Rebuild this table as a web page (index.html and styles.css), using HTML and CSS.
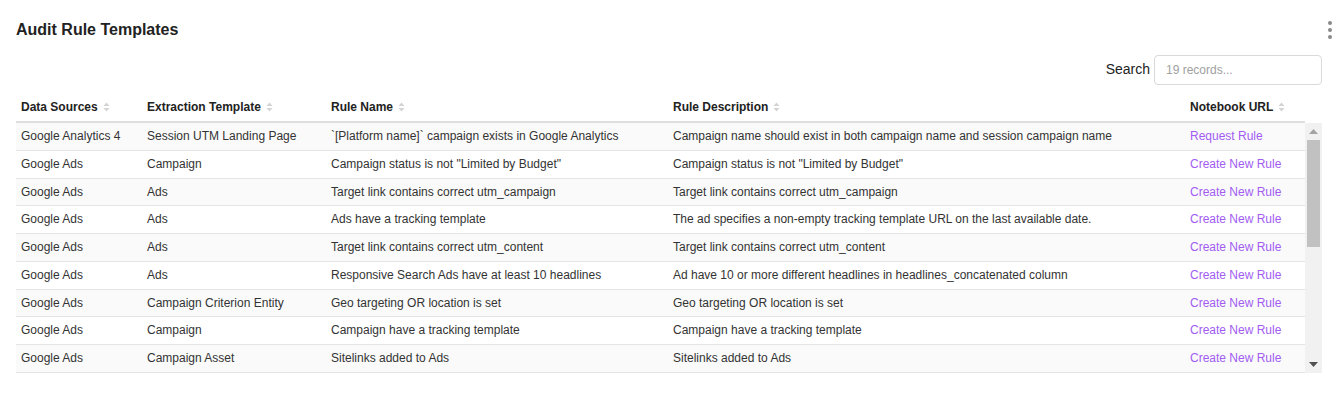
FILE: index.html
```html
<!DOCTYPE html>
<html>
<head>
<meta charset="utf-8">
<link rel="stylesheet" href="styles.css">
</head>
<body>
<div class="page">
  <div class="titlebar">
    <h1 class="title">Audit Rule Templates</h1>
    <div class="kebab"><span></span><span></span><span></span></div>
  </div>
  <div class="searchbar">
    <label class="search-label">Search</label>
    <input class="search-input" type="text" placeholder="19 records...">
  </div>
  <div class="table">
    <div class="thead row-grid">
      <div class="th">Data Sources <svg class="sort" width="7" height="10" viewBox="0 0 7 10"><path d="M3.5 0.5 L6.5 4 L0.5 4 Z M3.5 9.5 L6.5 6 L0.5 6 Z" fill="#d4d4d4"/></svg></div>
      <div class="th">Extraction Template <svg class="sort" width="7" height="10" viewBox="0 0 7 10"><path d="M3.5 0.5 L6.5 4 L0.5 4 Z M3.5 9.5 L6.5 6 L0.5 6 Z" fill="#d4d4d4"/></svg></div>
      <div class="th">Rule Name <svg class="sort" width="7" height="10" viewBox="0 0 7 10"><path d="M3.5 0.5 L6.5 4 L0.5 4 Z M3.5 9.5 L6.5 6 L0.5 6 Z" fill="#d4d4d4"/></svg></div>
      <div class="th">Rule Description <svg class="sort" width="7" height="10" viewBox="0 0 7 10"><path d="M3.5 0.5 L6.5 4 L0.5 4 Z M3.5 9.5 L6.5 6 L0.5 6 Z" fill="#d4d4d4"/></svg></div>
      <div class="th">Notebook URL <svg class="sort" width="7" height="10" viewBox="0 0 7 10"><path d="M3.5 0.5 L6.5 4 L0.5 4 Z M3.5 9.5 L6.5 6 L0.5 6 Z" fill="#d4d4d4"/></svg></div>
    </div>
    <div class="tbody-wrap">
      <div class="tbody">
        <div class="tr row-grid"><div class="td">Google Analytics 4</div><div class="td">Session UTM Landing Page</div><div class="td">`[Platform name]` campaign exists in Google Analytics</div><div class="td">Campaign name should exist in both campaign name and session campaign name</div><div class="td"><a class="link">Request Rule</a></div></div>
        <div class="tr row-grid"><div class="td">Google Ads</div><div class="td">Campaign</div><div class="td">Campaign status is not "Limited by Budget"</div><div class="td">Campaign status is not "Limited by Budget"</div><div class="td"><a class="link">Create New Rule</a></div></div>
        <div class="tr row-grid"><div class="td">Google Ads</div><div class="td">Ads</div><div class="td">Target link contains correct utm_campaign</div><div class="td">Target link contains correct utm_campaign</div><div class="td"><a class="link">Create New Rule</a></div></div>
        <div class="tr row-grid"><div class="td">Google Ads</div><div class="td">Ads</div><div class="td">Ads have a tracking template</div><div class="td">The ad specifies a non-empty tracking template URL on the last available date.</div><div class="td"><a class="link">Create New Rule</a></div></div>
        <div class="tr row-grid"><div class="td">Google Ads</div><div class="td">Ads</div><div class="td">Target link contains correct utm_content</div><div class="td">Target link contains correct utm_content</div><div class="td"><a class="link">Create New Rule</a></div></div>
        <div class="tr row-grid"><div class="td">Google Ads</div><div class="td">Ads</div><div class="td">Responsive Search Ads have at least 10 headlines</div><div class="td">Ad have 10 or more different headlines in headlines_concatenated column</div><div class="td"><a class="link">Create New Rule</a></div></div>
        <div class="tr row-grid"><div class="td">Google Ads</div><div class="td">Campaign Criterion Entity</div><div class="td">Geo targeting OR location is set</div><div class="td">Geo targeting OR location is set</div><div class="td"><a class="link">Create New Rule</a></div></div>
        <div class="tr row-grid"><div class="td">Google Ads</div><div class="td">Campaign</div><div class="td">Campaign have a tracking template</div><div class="td">Campaign have a tracking template</div><div class="td"><a class="link">Create New Rule</a></div></div>
        <div class="tr row-grid"><div class="td">Google Ads</div><div class="td">Campaign Asset</div><div class="td">Sitelinks added to Ads</div><div class="td">Sitelinks added to Ads</div><div class="td"><a class="link">Create New Rule</a></div></div>
      </div>
      <div class="scrollbar">
        <div class="sb-btn"><svg width="9" height="5" viewBox="0 0 9 5"><path d="M4.5 0 L9 5 L0 5 Z" fill="#a3a3a3"/></svg></div>
        <div class="sb-track"><div class="sb-thumb"></div></div>
        <div class="sb-btn"><svg width="9" height="5" viewBox="0 0 9 5"><path d="M0 0 L9 0 L4.5 5 Z" fill="#505050"/></svg></div>
      </div>
    </div>
  </div>
</div>
</body>
</html>
```

FILE: styles.css
```css
* { box-sizing: border-box; }
html, body { margin: 0; padding: 0; background: #fff; }
body {
  font-family: "Liberation Sans", Arial, sans-serif;
  color: #333;
  font-size: 12px;
}
.page {
  padding: 21px 20px 0 16px;
}
.titlebar {
  display: flex;
  justify-content: space-between;
  align-items: center;
  height: 18px;
}
.title {
  margin: 0;
  font-size: 16px;
  line-height: 18px;
  font-weight: bold;
  color: #222;
}
.kebab {
  display: flex;
  flex-direction: column;
  gap: 3px;
  margin-right: -10px;
}
.kebab span {
  width: 4px;
  height: 4px;
  border-radius: 50%;
  background: #8a8a8a;
}
.searchbar {
  display: flex;
  justify-content: flex-end;
  align-items: center;
  gap: 4px;
  margin-top: 16px;
}
.search-label {
  font-size: 14px;
  line-height: 16px;
  margin-bottom: 2px;
  color: #222;
}
.search-input {
  width: 168px;
  height: 30px;
  border: 1px solid #d9d9d9;
  border-radius: 4px;
  padding: 0 11px;
  font-family: "Liberation Sans", Arial, sans-serif;
  font-size: 12px;
  color: #333;
  outline: none;
}
.search-input::placeholder { color: #a0a0a0; }
.table {
  margin-top: 5px;
}
.row-grid {
  display: grid;
  grid-template-columns: 126px 184px 342px 517px 120px;
  width: 1289px;
}
.thead {
  border-bottom: 2px solid #dedede;
}
.th {
  padding: 9px 5px 6px;
  line-height: 16px;
  font-weight: bold;
  color: #222;
  display: flex;
  align-items: center;
  gap: 5px;
  white-space: nowrap;
}
.sort { display: block; }
.tbody-wrap {
  display: flex;
  height: 250px;
}
.tbody {
  width: 1289px;
  height: 250px;
  overflow: hidden;
}
.tr {
  border-bottom: 1px solid #e4e4e4;
}
.tr:nth-child(odd) { background: #fafafa; }
.td {
  padding: 5px 5px;
  line-height: 16.75px;
  white-space: nowrap;
  overflow: hidden;
  color: #333;
}
.link {
  color: #a25cf2;
  cursor: pointer;
}
.scrollbar {
  width: 17px;
  height: 250px;
  background: #f1f1f1;
  display: flex;
  flex-direction: column;
}
.sb-btn {
  height: 17px;
  display: flex;
  align-items: center;
  justify-content: center;
}
.sb-btn svg { display: block; }
.sb-track {
  flex: 1;
  padding: 0 2px;
}
.sb-thumb {
  height: 107px;
  background: #c1c1c1;
}
```
